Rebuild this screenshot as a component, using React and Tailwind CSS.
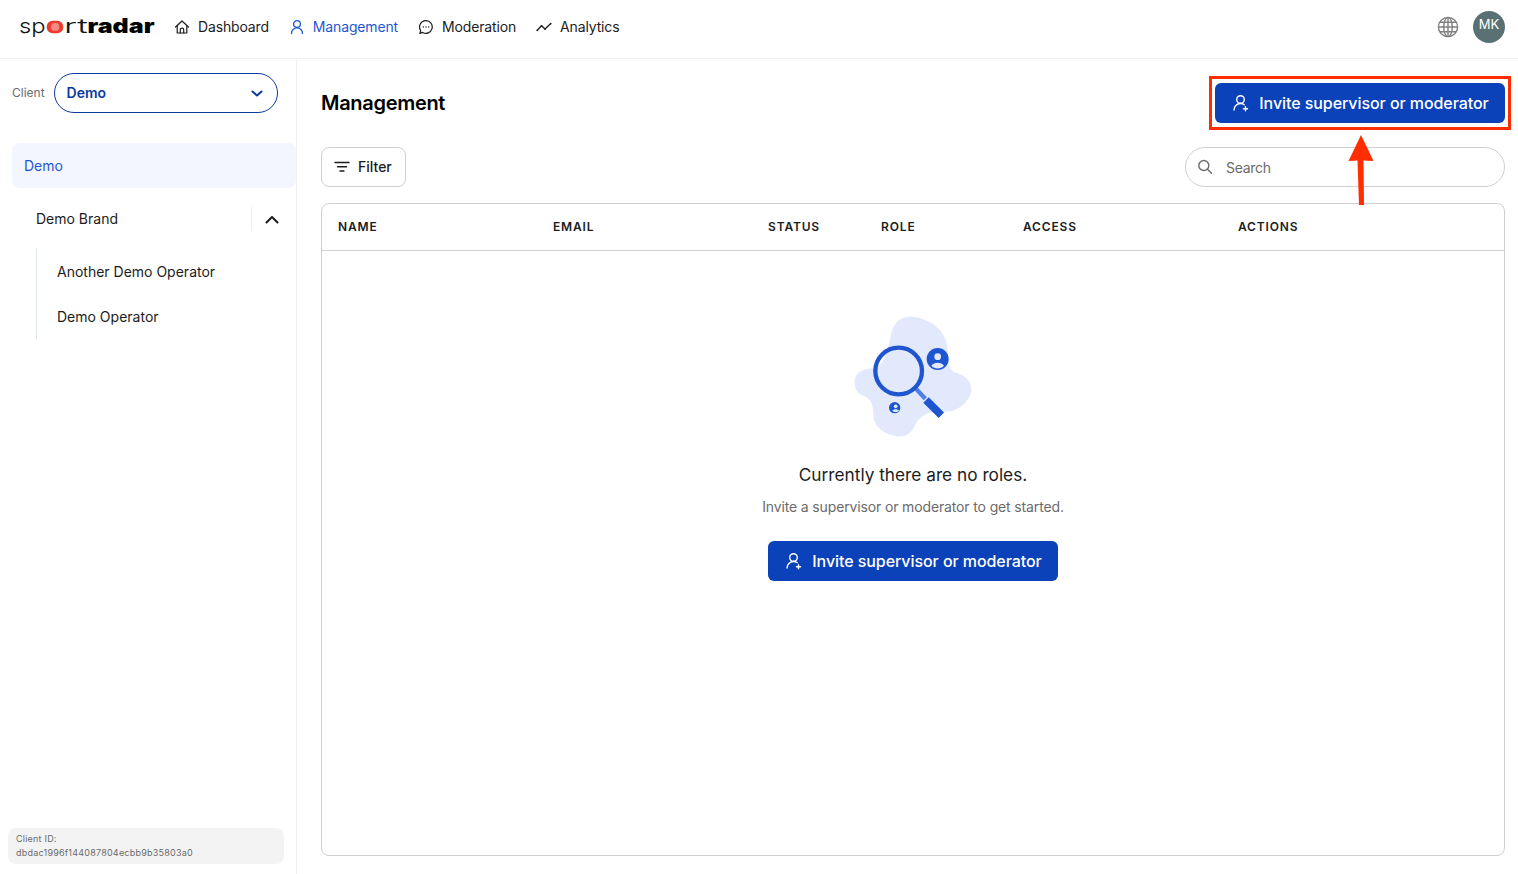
import React from "react";

const font = { fontFamily: '"Inter", "Liberation Sans", sans-serif' };

function Logo() {
  return (
    <svg width="135" height="28" viewBox="0 0 135 28" className="block shrink-0" aria-label="sportradar">
      <text x="-1" y="19.5" fontFamily="Inter, sans-serif" fontWeight="300" fontSize="20" textLength="26.5" lengthAdjust="spacingAndGlyphs" fill="#111">sp</text>
      <rect x="26.7" y="7.700" width="16.6" height="12.6" rx="6" fill="#ef3b2d" />
      <rect x="31.2" y="10" width="8" height="7.8" rx="3.4" fill="#f58a80" />
      <text x="44" y="19.5" fontFamily="Inter, sans-serif" fontWeight="300" fontSize="20" textLength="24" lengthAdjust="spacingAndGlyphs" fill="#111">rt</text>
      <text x="67.500" y="19.5" fontFamily="Inter, sans-serif" fontWeight="900" fontSize="20" textLength="67" lengthAdjust="spacingAndGlyphs" fill="#000">radar</text>
    </svg>
  );
}

const HomeIcon = () => (
  <svg width="16" height="16" viewBox="0 0 16 16" fill="none" stroke="#1c1c1c" strokeWidth="1.2" strokeLinejoin="round" strokeLinecap="round">
    <path d="M1.5 8 8 2l6.5 6" />
    <path d="M3.2 7v7h9.6V7" />
    <path d="M6.3 14v-3.2a1.7 1.7 0 0 1 3.4 0V14" />
  </svg>
);
const UserIcon = ({ color }) => (
  <svg width="16" height="16" viewBox="0 0 16 16" fill="none" stroke={color} strokeWidth="1.3" strokeLinecap="round">
    <circle cx="8" cy="5" r="3.4" />
    <path d="M2.5 14.5c0-3.2 2.4-5.6 5.5-5.6s5.500 2.400 5.500 5.600" />
  </svg>
);
const UserPlusIcon = () => (
  <svg width="16" height="18" viewBox="0 0 16 18" fill="none" stroke="#fff" strokeWidth="1.4" strokeLinecap="round" className="shrink-0">
    <circle cx="7.500" cy="5.500" r="3.800" />
    <path d="M1 16c0-3.600 2.800-6.500 6.500-6.500 1.500 0 2.700.4 3.700 1.200" />
    <path d="M12.500 12.800v4M10.500 14.800h4" />
  </svg>
);
const ChatIcon = () => (
  <svg width="16" height="16" viewBox="0 0 16 16" fill="none" stroke="#1c1c1c" strokeWidth="1.200" strokeLinejoin="round">
    <path d="M8 1.700a6.300 6.300 0 1 1-3.300 11.700L1.800 14.400l.9-2.800A6.300 6.300 0 0 1 8 1.700Z" />
    <circle cx="5.300" cy="8" r=".7" fill="#1c1c1c" stroke="none" />
    <circle cx="8" cy="8" r=".7" fill="#1c1c1c" stroke="none" />
    <circle cx="10.700" cy="8" r=".7" fill="#1c1c1c" stroke="none" />
  </svg>
);
const AnalyticsIcon = () => (
  <svg width="16" height="16" viewBox="0 0 16 16" fill="none" stroke="#1c1c1c" strokeWidth="1.300" strokeLinejoin="round">
    <path d="M1 11.500 5.500 6.800 9 10l5.800-5.500" />
    <circle cx="1.300" cy="11.300" r=".9" fill="#1c1c1c" stroke="none" />
    <circle cx="5.500" cy="6.800" r=".9" fill="#1c1c1c" stroke="none" />
    <circle cx="9" cy="10" r=".9" fill="#1c1c1c" stroke="none" />
    <circle cx="14.700" cy="4.600" r=".9" fill="#1c1c1c" stroke="none" />
  </svg>
);
const GlobeIcon = () => (
  <svg width="22" height="22" viewBox="0 0 22 22" fill="none" stroke="#808080" strokeWidth="1.400">
    <circle cx="11" cy="11" r="9.600" />
    <ellipse cx="11" cy="11" rx="4.300" ry="9.600" />
    <path d="M11 1.400v19.200M1.400 11h19.200M2.700 6.300h16.600M2.700 15.700h16.600" />
  </svg>
);
const FilterIcon = () => (
  <svg width="16" height="12" viewBox="0 0 16 12" fill="none" stroke="#1c1c1c" strokeWidth="1.400" strokeLinecap="round">
    <path d="M1 1.500h14M3.500 5.800h9M6 10h4" />
  </svg>
);
const SearchIcon = () => (
  <svg width="16" height="16" viewBox="0 0 16 16" fill="none" stroke="#6b6b6b" strokeWidth="1.400" strokeLinecap="round">
    <circle cx="6.800" cy="6.500" r="5" />
    <path d="m10.500 10.300 4 4" />
  </svg>
);
const Chevron = ({ up, color, width = 2 }) => (
  <svg width="14" height="9" viewBox="0 0 14 9" fill="none" stroke={color} strokeWidth={width} strokeLinecap="round" strokeLinejoin="round">
    <path d={up ? "M1.500 7.500 7 2l5.500 5.500" : "M2.500 2.500 7 6.500l4.500-4"} />
  </svg>
);

function EmptyArt() {
  return (
    <svg width="120" height="122" viewBox="69 48 360 366" className="block">
      <path d="M185 95C195 60 225 42 260 52C305 62 345 90 352 140C356 175 352 205 375 218C400 222 425 240 424 270C420 305 385 335 345 335C300 332 270 345 255 375C245 400 225 415 195 408C160 400 130 380 130 345C130 310 120 295 100 287C78 280 68 255 76 232C85 212 110 205 135 205C165 195 175 140 185 95Z" fill="#e2e9fc" />
      <path d="m258 266 28 30" stroke="#4f7fe8" strokeWidth="13" />
      <path d="m288 300 46 46" stroke="#1f56d0" strokeWidth="23" />
      <circle cx="206" cy="213" r="70" fill="none" stroke="#1f56d0" strokeWidth="13" />
      <circle cx="323" cy="177" r="33" fill="#1f56d0" />
      <circle cx="323" cy="170" r="10" fill="#e2e9fc" />
      <path d="M304 197c8-12 30-12 38 0-10 11-28 11-38 0Z" fill="#e2e9fc" />
      <circle cx="194" cy="323" r="17" fill="#1f56d0" />
      <circle cx="197" cy="319" r="5.500" fill="#e2e9fc" />
      <path d="M187 332c4-6 16-6 20 0-5 5-15 5-20 0Z" fill="#e2e9fc" />
    </svg>
  );
}

function InviteButton() {
  return (
    <button className="flex h-10 w-[290px] items-center justify-center gap-[10px] rounded-md bg-[#0b41b9] pl-[2px] text-base font-medium tracking-[-0.07px] text-white">
      <UserPlusIcon />
      Invite supervisor or moderator
    </button>
  );
}

function NavItem({ icon, label, active }) {
  return (
    <a className={`flex items-center gap-2 text-sm tracking-[-0.15px] ${active ? "text-[#1f56d0]" : "text-[#1c1c1c]"}`}>
      {icon}
      {label}
    </a>
  );
}

const columns = ["NAME", "EMAIL", "STATUS", "ROLE", "ACCESS", "ACTIONS"];

export default function App() {
  return (
    <div style={font} className="relative flex h-screen w-full flex-col overflow-hidden bg-white text-[#1c1c1c]">
      <header className="flex h-[59px] shrink-0 items-center justify-between border-b border-[#f0f0f0] pb-1 pl-5 pr-[13px]">
        <div className="flex items-center">
          <Logo />
          <nav className="ml-[19px] flex items-center gap-5">
            <NavItem icon={<HomeIcon />} label="Dashboard" />
            <NavItem icon={<UserIcon color="#1f56d0" />} label="Management" active />
            <NavItem icon={<ChatIcon />} label="Moderation" />
            <NavItem icon={<AnalyticsIcon />} label="Analytics" />
          </nav>
        </div>
        <div className="flex items-center gap-[14px]">
          <GlobeIcon />
          <div className="flex h-8 w-8 items-center justify-center rounded-full bg-[#5a7174] pb-1 text-[13px] text-white">MK</div>
        </div>
      </header>

      <div className="flex min-h-0 flex-1">
        <aside className="flex w-[297px] shrink-0 flex-col border-r border-[#f0f0f0]">
          <div className="flex items-center gap-[9px] pl-3 pt-[14px]">
            <span className="text-xs text-[#6b6b6b]">Client</span>
            <div className="flex h-10 w-56 items-center justify-between rounded-full border border-[#0b3a9f] pl-3 pr-[13px] text-sm font-semibold text-[#0b3a9f]">
              Demo
              <Chevron color="#0b3a9f" />
            </div>
          </div>
          <div className="ml-3 mt-[30px] flex h-[45px] items-center rounded-lg bg-[#f3f6fe] pl-3 text-sm text-[#1f56d0]">Demo</div>
          <div className="ml-9 mt-[7px] flex h-[48px] items-center justify-between pr-[17px] text-sm">
            Demo Brand
            <div className="flex h-6 items-center border-l border-[#eeeeee] pl-[13px]">
              <Chevron up color="#1c1c1c" />
            </div>
          </div>
          <div className="ml-9 mt-[6px] flex flex-col border-l border-[#e1e7f0] text-sm">
            <div className="flex h-[45px] items-center pl-5">Another Demo Operator</div>
            <div className="flex h-[45px] items-center pl-5">Demo Operator</div>
          </div>
          <div className="mb-[10px] ml-2 mt-auto h-9 w-[276px] rounded-lg bg-[#f3f3f3] px-2 py-1 text-[9px] leading-[14px] tracking-[0.22px] text-[#6b6b6b]">
            <div>Client ID:</div>
            <div>dbdac1996f144087804ecbb9b35803a0</div>
          </div>
        </aside>

        <main className="flex min-w-0 flex-1 flex-col pb-[18px] pl-6 pr-[13px] pt-6">
          <div className="flex items-center justify-between">
            <h1 className="text-xl font-semibold tracking-[-0.3px] text-black">Management</h1>
            <InviteButton />
          </div>
          <div className="mt-6 flex items-center justify-between">
            <button className="flex h-10 items-center gap-2 rounded-lg border border-[#d0d0d0] pl-3 pr-[13px] text-sm font-medium">
              <FilterIcon />
              Filter
            </button>
            <label className="flex h-10 w-80 items-center gap-[13px] rounded-full border border-[#d0d0d0] pl-[11px] text-sm">
              <SearchIcon />
              <input placeholder="Search" className="min-w-0 flex-1 pt-[2px] tracking-[-0.3px] outline-none placeholder:text-[#6b6b6b]" />
            </label>
          </div>
          <section className="mt-4 flex min-h-0 flex-1 flex-col rounded-lg border border-[#d0d0d0]">
            <div className="grid h-[47px] shrink-0 grid-cols-[215px_215px_113px_142px_215px_1fr] items-center border-b border-[#d0d0d0] pl-4 text-xs font-semibold tracking-[0.85px] text-[#1c1c1c]">
              {columns.map((c) => (
                <div key={c}>{c}</div>
              ))}
            </div>
            <div className="flex flex-col items-center pt-[65px]">
              <EmptyArt />
              <div className="mt-[25px] text-[17.25px] leading-6 text-[#1c1c1c]">Currently there are no roles.</div>
              <div className="mt-[10px] text-sm leading-5 tracking-[-0.14px] text-[#6b6b6b]">Invite a supervisor or moderator to get started.</div>
              <div className="mt-6">
                <InviteButton />
              </div>
            </div>
          </section>
        </main>
      </div>

      <div className="pointer-events-none absolute left-[1209px] top-[76px] h-[54px] w-[302px] border-[3px] border-[#ff2e00]" />
      <svg className="pointer-events-none absolute left-[1345px] top-[132px]" width="32" height="76" viewBox="0 0 32 76">
        <path d="M16 3 28.500 29 18.500 28.500 19 73 14 73 12.500 28.500 3.500 29Z" fill="#ff2e00" />
      </svg>
    </div>
  );
}
